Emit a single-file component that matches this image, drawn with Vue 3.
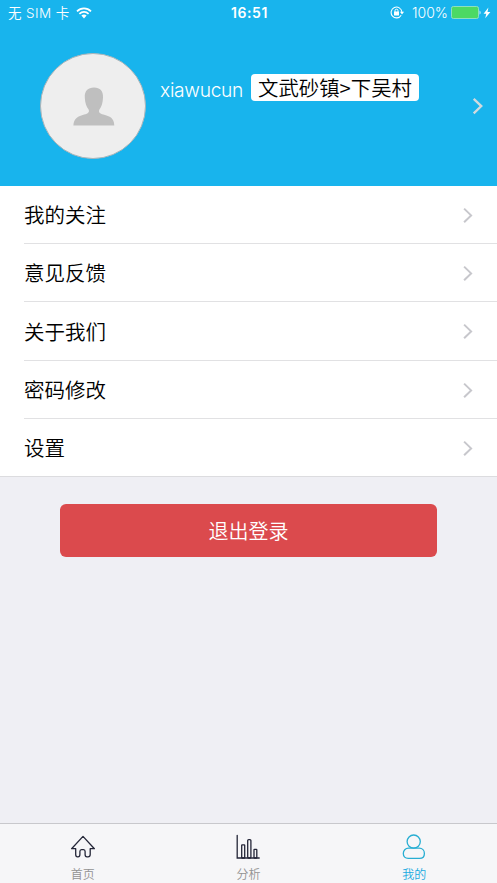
<script setup>
const rows = ['我的关注', '意见反馈', '关于我们', '密码修改', '设置']
</script>

<template>
  <div class="screen">
    <header class="profile">
      <div class="status">
        <div class="carrier">
          <span class="carrier-text">无 SIM 卡</span>
          <svg class="wifi" width="16" height="12" viewBox="0 0 16 12">
            <g fill="none" stroke="#fff" stroke-width="1.7">
              <path d="M1 4.4C5 .3 11 .3 15 4.4" />
              <path d="M3.4 6.8C6 4.2 10 4.2 12.6 6.8" />
            </g>
            <path d="M5.4 8.6C6.9 7.2 9.1 7.2 10.6 8.6L8 11.4z" fill="#fff" />
          </svg>
        </div>
        <div class="time">16:51</div>
        <div class="power">
          <svg class="lock" width="15" height="13" viewBox="0 0 15 13">
            <path d="M11.2 9.2A5.4 5.4 0 1 1 11.9 6" fill="none" stroke="#fff" stroke-width="1.1" />
            <path d="M9.9 5.8h4.2L12 8.4z" fill="#fff" />
            <rect x="4" y="5.6" width="5" height="3.9" rx=".5" fill="#fff" />
            <path d="M5 6V4.7a1.5 1.5 0 0 1 3 0V6" fill="none" stroke="#fff" stroke-width="1" />
          </svg>
          <span class="percent">100%</span>
          <svg class="battery" width="30" height="13" viewBox="0 0 30 13">
            <rect x=".5" y=".5" width="27" height="12" rx="1.8" fill="#4cd964" stroke="#8ce0c0" />
            <path d="M28.6 4.4c1.2.5 1.2 3.7 0 4.2z" fill="#fff" />
          </svg>
          <svg class="bolt" width="8" height="12" viewBox="0 0 8 12">
            <path d="M5.4.5L.6 6.7h2.7L2.2 11.3 7.4 5H4.5z" fill="#fff" />
          </svg>
        </div>
      </div>
      <div class="user">
        <div class="avatar">
          <svg width="42" height="39" viewBox="0 0 42 39">
            <path
              d="M21 .5C27 .5 30.4 4.1 30 10.5C29.8 16 28.6 19.8 26.4 22.4C25.2 25 26.8 26.6 30.4 27.6C37 29.3 41 31.2 41.3 38.4H.4C.8 31.2 5 29.2 11.2 27.5C15.2 26.4 16.7 25 15.6 22.4C13.4 19.8 12 16 11.8 10.5C11.4 4.1 15 .5 21 .5z"
              fill="#bfbfbf"
            />
          </svg>
        </div>
        <div class="name">xiawucun</div>
        <div class="place">文武砂镇&gt;下吴村</div>
        <svg class="go" width="12" height="18" viewBox="0 0 12 18">
          <path d="M1.7 1.8L9.3 9.1L1.7 16.4" fill="none" stroke="#d2dade" stroke-width="2.3" />
        </svg>
      </div>
    </header>

    <ul class="list">
      <li v-for="row in rows" :key="row" class="row">
        <span>{{ row }}</span>
        <svg width="11" height="17" viewBox="0 0 11 17">
          <path d="M1.1 1.6L8.1 8.4L1.1 15.2" fill="none" stroke="#c7c7cc" stroke-width="2" />
        </svg>
      </li>
    </ul>

    <main class="content">
      <button class="logout">退出登录</button>
    </main>

    <nav class="tabs">
      <div class="tab">
        <svg width="26" height="26" viewBox="0 0 26 26">
          <path
            d="M13 2.4L1.6 14.7H5.7V20.4Q5.7 22.8 7.5 22.8H8Q9.9 22.8 9.9 20.4V17.5Q9.9 15.6 11.5 15.6H13.5Q15.1 15.6 15.1 17.5V20.4Q15.1 22.8 17 22.8H18Q20.2 22.8 20.2 20.4V14.7H24.4z"
            fill="none" stroke="#242638" stroke-width="1.3" stroke-linejoin="round"
          />
        </svg>
        <span>首页</span>
      </div>
      <div class="tab">
        <svg width="26" height="26" viewBox="0 0 26 26">
          <g fill="none" stroke="#242638" stroke-width="1.3" stroke-linecap="round">
            <path d="M2.2 1.3V24H24.2" />
            <rect x="6.7" y="10.8" width="3" height="13.2" rx=".5" />
            <rect x="12.7" y="5.6" width="3.2" height="18.4" rx="1" />
            <rect x="19" y="15.3" width="2.8" height="8.7" rx=".5" />
          </g>
        </svg>
        <span>分析</span>
      </div>
      <div class="tab active">
        <svg width="26" height="26" viewBox="0 0 26 26">
          <g fill="none" stroke="#28aed2" stroke-width="1.3">
            <circle cx="12.7" cy="7.6" r="6.6" />
            <path d="M7.5 14.2H18.2C21.3 14.2 23.4 16.6 23.4 19.5C23.4 22.6 21.6 24.4 18.6 24.4H7.2C4.2 24.4 2.3 22.6 2.3 19.5C2.3 16.6 4.4 14.2 7.5 14.2z" />
          </g>
        </svg>
        <span>我的</span>
      </div>
    </nav>
  </div>
</template>

<style>
body {
  margin: 0;
}
</style>

<style scoped>
.screen {
  display: flex;
  flex-direction: column;
  width: 497px;
  height: 883px;
  overflow: hidden;
  background: #efeff4;
  color: #000;
  font-family: Inter, "Noto Sans CJK SC", sans-serif;
  font-weight: 350;
}
.profile {
  height: 186px;
  flex: none;
  background: #18b4ed;
  color: #fff;
}
.status {
  display: grid;
  grid-template-columns: 1fr auto 1fr;
  align-items: center;
  height: 26px;
  padding: 0 6px 0 8px;
  font-size: 13.5px;
  line-height: 26px;
}
.carrier,
.power {
  display: flex;
  align-items: center;
}
.carrier-text {
  white-space: nowrap;
  letter-spacing: 0.4px;
}
.wifi {
  margin-left: 6px;
  margin-top: -1px;
}
.time {
  font-weight: 600;
  font-size: 14px;
  letter-spacing: 0.6px;
}
.power {
  justify-content: flex-end;
}
.lock {
  margin-top: -1px;
}
.percent {
  margin-left: 7px;
  font-size: 14px;
}
.battery {
  margin-left: 3px;
  margin-top: -1px;
}
.bolt {
  margin-left: 2px;
  margin-top: -1px;
}
.user {
  display: flex;
  align-items: flex-start;
  height: 160px;
  padding-left: 40px;
}
.avatar {
  box-sizing: border-box;
  display: flex;
  justify-content: center;
  width: 106px;
  height: 106px;
  margin-top: 27px;
  padding-top: 33px;
  padding-left: 1px;
  border: 1px solid #a9b4b9;
  border-radius: 50%;
  background: #eee;
}
.name {
  width: 91px;
  margin: 50px 0 0 14px;
  font-size: 19.2px;
  font-weight: 300;
  letter-spacing: -0.3px;
  line-height: 28px;
}
.place {
  box-sizing: border-box;
  width: 168px;
  height: 27px;
  margin-top: 48px;
  border-radius: 4px;
  background: #fff;
  color: #000;
  font-family: "Noto Sans CJK SC", sans-serif;
  font-size: 20.4px;
  line-height: 26px;
  text-align: center;
  white-space: nowrap;
}
.go {
  margin: 71px 0 0 53px;
}
.list {
  flex: none;
  height: 290px;
  margin: 0;
  padding: 0 0 0 24px;
  list-style: none;
  display: grid;
  grid-template-rows: 58px 58px 59px 58px 57px;
  background: #fff;
  border-bottom: 1px solid #dcdcdf;
}
.row {
  display: flex;
  align-items: center;
  justify-content: space-between;
  box-sizing: border-box;
  padding: 1px 23px 0 0;
  border-bottom: 1px solid #e1e1e3;
  font-size: 20.5px;
  line-height: 30px;
}
.row span {
  padding-top: 2px;
}
.row:last-child {
  border-bottom: 0;
}
.content {
  flex: 1;
  padding: 27px 60px 0;
}
.logout {
  display: block;
  width: 377px;
  height: 53px;
  padding: 0;
  border: 0;
  border-radius: 6px;
  background: #db4a4d;
  color: #fff;
  font-family: "Noto Sans CJK SC", sans-serif;
  font-size: 20px;
  font-weight: 350;
  line-height: 53px;
}
.tabs {
  flex: none;
  box-sizing: border-box;
  display: grid;
  grid-template-columns: repeat(3, 1fr);
  height: 60px;
  border-top: 1px solid #c8c8cc;
  background: #f6f6f8;
}
.tab {
  display: flex;
  flex-direction: column;
  align-items: center;
  padding-top: 10px;
  color: #929292;
  font-size: 12px;
  line-height: 16px;
}
.tab span {
  margin-top: 7px;
}
.tab.active {
  color: #18a9e0;
}
</style>
